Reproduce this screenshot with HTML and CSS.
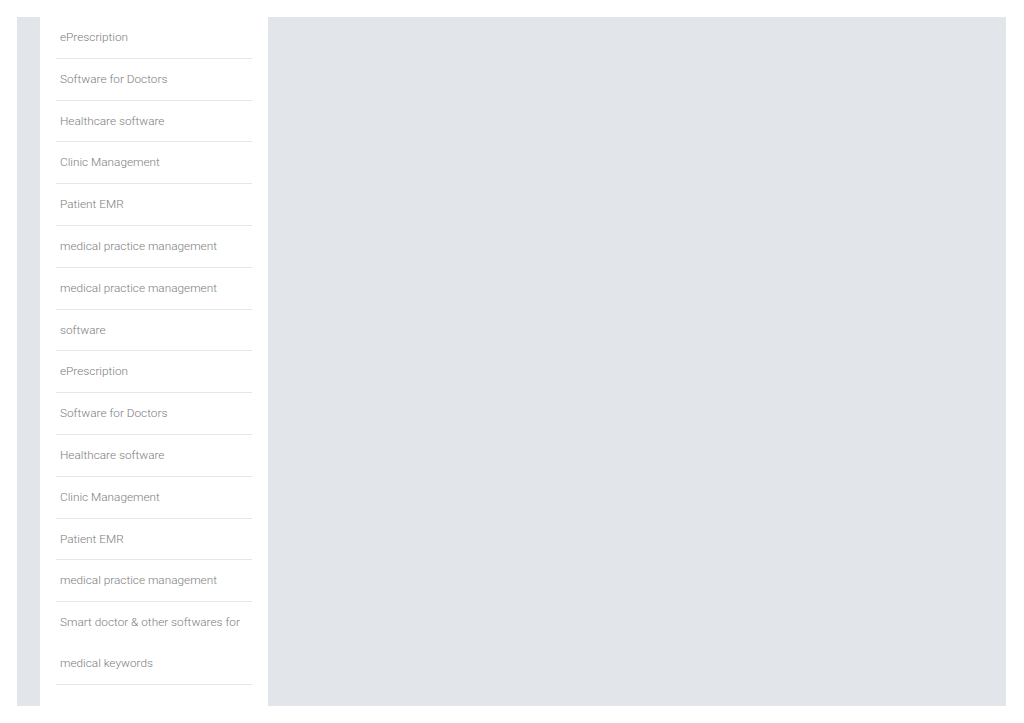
FILE: index.html
```html
<!DOCTYPE html>
<html>
<head>
<meta charset="utf-8">
<link rel="stylesheet" href="styles.css">
</head>
<body>
<div class="frame">
  <div class="rail"></div>
  <aside class="sidebar">
    <ul class="links">
      <li>ePrescription</li>
      <li>Software for Doctors</li>
      <li>Healthcare software</li>
      <li>Clinic Management</li>
      <li>Patient EMR</li>
      <li>medical practice management</li>
      <li>medical practice management</li>
      <li>software</li>
      <li>ePrescription</li>
      <li>Software for Doctors</li>
      <li>Healthcare software</li>
      <li>Clinic Management</li>
      <li>Patient EMR</li>
      <li>medical practice management</li>
      <li>Smart doctor &amp; other softwares for medical keywords</li>
    </ul>
  </aside>
  <main class="content"></main>
</div>
</body>
</html>
```
FILE: styles.css
```css
html, body {
  margin: 0;
  padding: 0;
  background: #ffffff;
}
body {
  padding: 17px 18px 17px 17px;
  font-family: Roboto, "Liberation Sans", sans-serif;
}
.frame {
  display: flex;
  height: 689px;
  background: #e2e5ea;
}
.rail {
  width: 23px;
  flex: none;
}
.sidebar {
  width: 196px;
  flex: none;
  background: #ffffff;
  padding: 0 16px;
  overflow: hidden;
}
.links {
  list-style: none;
  margin: 0;
  padding: 0;
}
.links li {
  padding: 0 4px;
  font-size: 11.8px;
  font-weight: 300;
  line-height: 40.8px;
  color: #7d7d7d;
  border-bottom: 1px solid #e6e6e6;
}
.content {
  flex: 1;
  background: #e2e5ea;
}
```
